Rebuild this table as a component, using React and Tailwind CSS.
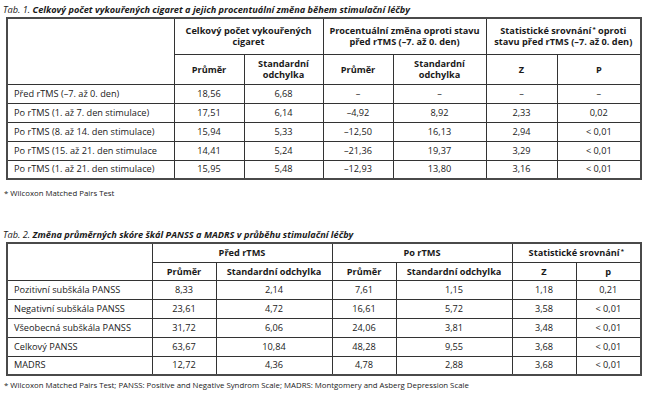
import React from "react";

const font = { fontFamily: '"Open Sans", "Noto Sans", sans-serif' };

// first table: cigarettes
const smokeRows = [
  ["Před rTMS (–7. až 0. den)", "18,56", "6,68", "–", "–", "–", "–"],
  ["Po rTMS (1. až 7. den stimulace)", "17,51", "6,14", "–4,92", "8,92", "2,33", "0,02"],
  ["Po rTMS (8. až 14. den stimulace)", "15,94", "5,33", "–12,50", "16,13", "2,94", "< 0,01"],
  ["Po rTMS (15. až 21. den stimulace", "14,41", "5,24", "–21,36", "19,37", "3,29", "< 0,01"],
  ["Po rTMS (1. až 21. den stimulace)", "15,95", "5,48", "–12,93", "13,80", "3,16", "< 0,01"],
];

// second table: PANSS / MADRS
const scaleRows = [
  ["Pozitivní subškála PANSS", "8,33", "2,14", "7,61", "1,15", "1,18", "0,21"],
  ["Negativní subškála PANSS", "23,61", "4,72", "16,61", "5,72", "3,58", "< 0,01"],
  ["Všeobecná subškála PANSS", "31,72", "6,06", "24,06", "3,81", "3,48", "< 0,01"],
  ["Celkový PANSS", "63,67", "10,84", "48,28", "9,55", "3,68", "< 0,01"],
  ["MADRS", "12,72", "4,36", "4,78", "2,88", "3,68", "< 0,01"],
];

const th = "border border-[#333] font-bold text-center leading-[11px] px-1";
const td = "border border-[#333] text-center";

const Caption = ({ num, children }) => (
  <p className="text-[9.2px] leading-[12px] italic text-[#1a1a1a]">
    Tab. {num}. <span className="font-bold">{children}</span>
  </p>
);

const Star = () => (
  <span className="relative -top-[3px] ml-[1px] text-[6px] leading-none">*</span>
);

const App = () => {
  return (
    <div className="w-[658px] h-[404px] bg-white text-[#1a1a1a] overflow-hidden px-[3px] pt-[4px]" style={font}>
      <Caption num={1}>
        Celkový počet vykouřených cigaret a jejich procentuální změna během stimulační léčby
      </Caption>
      <table className="ml-[3px] mt-[1px] w-[634px] table-fixed border-collapse border-2 border-[#4a4a4a] text-[9.2px]">
        <colgroup>
          <col className="w-[167px]" />
          <col className="w-[70px]" />
          <col className="w-[79px]" />
          <col className="w-[70px]" />
          <col className="w-[93px]" />
          <col className="w-[71px]" />
          <col className="w-[84px]" />
        </colgroup>
        <thead>
          <tr className="h-[36px]">
            <th rowSpan={2} className={th}></th>
            <th colSpan={2} className={th}>Celkový počet vykouřených cigaret</th>
            <th colSpan={2} className={th}>Procentuální změna oproti stavu před rTMS (–7. až 0. den)</th>
            <th colSpan={2} className={th}>
              Statistické srovnání<Star /> oproti stavu před rTMS (–7. až 0. den)
            </th>
          </tr>
          <tr className="h-[30px]">
            <th className={th}>Průměr</th>
            <th className={th}>Standardní odchylka</th>
            <th className={th}>Průměr</th>
            <th className={th}>Standardní odchylka</th>
            <th className={th}>Z</th>
            <th className={th}>P</th>
          </tr>
        </thead>
        <tbody>
          {smokeRows.map((r) => (
            <tr key={r[0]} className="h-[19px]">
              <td className="border border-[#333] pl-[6px] whitespace-nowrap">{r[0]}</td>
              {r.slice(1).map((v, i) => (
                <td key={i} className={td}>{v}</td>
              ))}
            </tr>
          ))}
        </tbody>
      </table>
      <p className="mt-[8px] ml-[1px] text-[7.8px] leading-[10px]">* Wilcoxon Matched Pairs Test</p>

      <div className="mt-[31px]">
        <Caption num={2}>
          Změna průměrných skóre škál PANSS a MADRS v průběhu stimulační léčby
        </Caption>
      </div>
      <table className="ml-[3px] mt-[1px] w-[634px] table-fixed border-collapse border-2 border-[#4a4a4a] text-[9.2px]">
        <colgroup>
          <col className="w-[145px]" />
          <col className="w-[64px]" />
          <col className="w-[116px]" />
          <col className="w-[64px]" />
          <col className="w-[116px]" />
          <col className="w-[64px]" />
          <col className="w-[65px]" />
        </colgroup>
        <thead>
          <tr className="h-[19px]">
            <th rowSpan={2} className={th}></th>
            <th colSpan={2} className={th}>Před rTMS</th>
            <th colSpan={2} className={th}>Po rTMS</th>
            <th colSpan={2} className={th}>
              Statistické srovnání<Star />
            </th>
          </tr>
          <tr className="h-[18px]">
            <th className={th}>Průměr</th>
            <th className={th}>Standardní odchylka</th>
            <th className={th}>Průměr</th>
            <th className={th}>Standardní odchylka</th>
            <th className={th}>Z</th>
            <th className={th}>p</th>
          </tr>
        </thead>
        <tbody>
          {scaleRows.map((r) => (
            <tr key={r[0]} className="h-[19px]">
              <td className="border border-[#333] pl-[6px] whitespace-nowrap">{r[0]}</td>
              {r.slice(1).map((v, i) => (
                <td key={i} className={td}>{v}</td>
              ))}
            </tr>
          ))}
        </tbody>
      </table>
      <p className="mt-[4px] ml-[1px] text-[7.8px] leading-[10px]">
        * Wilcoxon Matched Pairs Test; PANSS: Positive and Negative Syndrom Scale; MADRS: Montgomery and Asberg Depression Scale
      </p>
    </div>
  );
};

export default App;
